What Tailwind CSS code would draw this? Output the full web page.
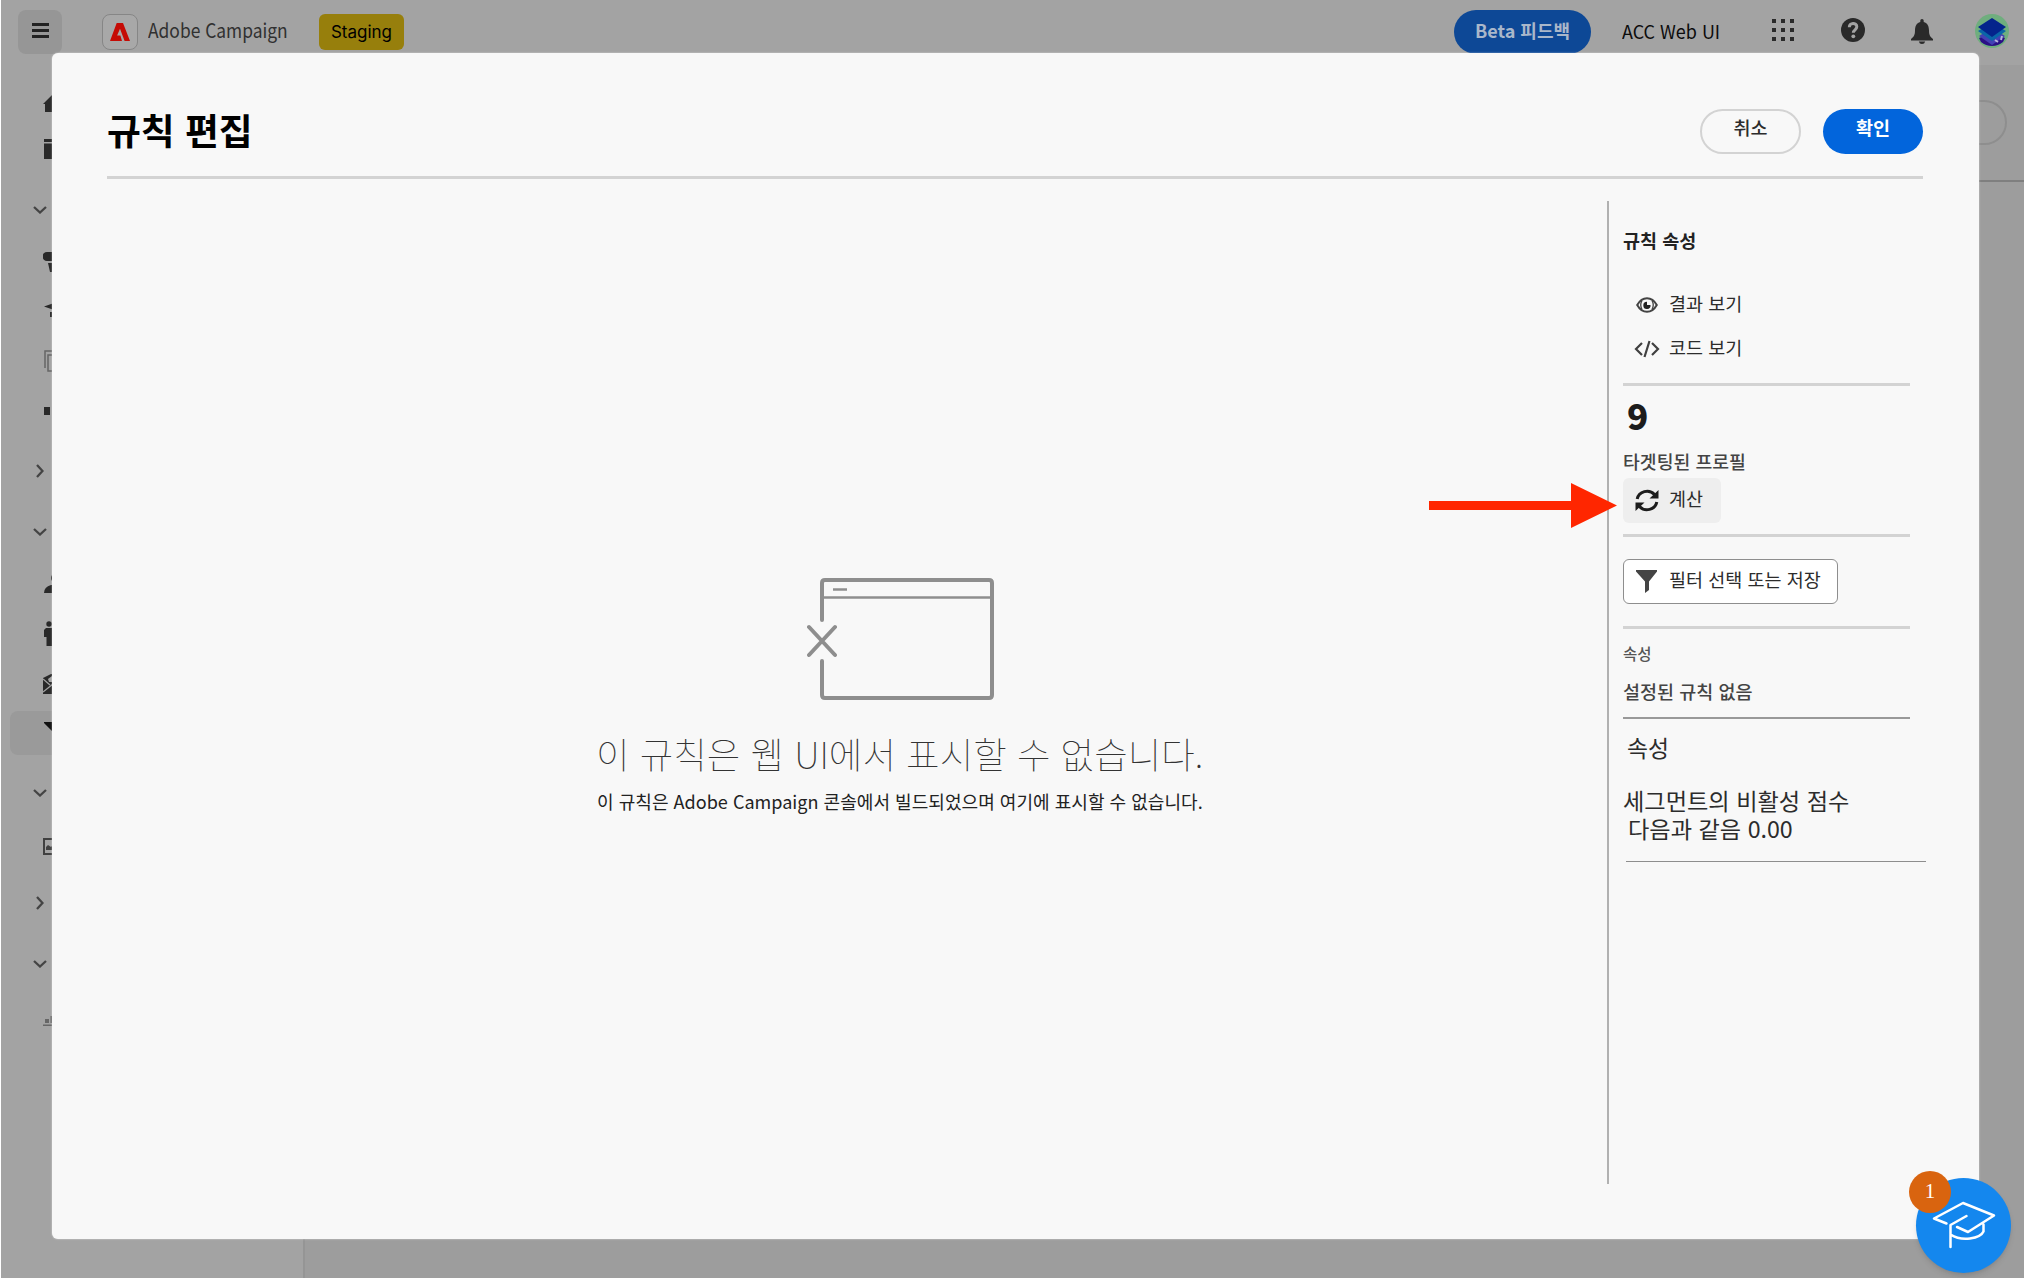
<!DOCTYPE html>
<html lang="ko">
<head>
<meta charset="utf-8">
<title>규칙 편집</title>
<script src="https://cdn.jsdelivr.net/npm/@tailwindcss/browser@4"></script>
</head>
<body class="relative h-[1278px] w-[2024px] overflow-hidden bg-white pl-px font-['Noto_Sans_CJK_KR',sans-serif] text-[#2c2c2c]">
<div class="flex h-full flex-col bg-[#9d9d9d]">
  <header class="flex h-[65px] shrink-0 items-start bg-[#a3a3a3]">
    <div class="mt-[10px] ml-[17px] flex h-11 w-11 flex-col items-center justify-center gap-[3px] rounded-lg bg-[#969696] pb-[3px]">
      <i class="h-[3px] w-[17px] bg-[#222]"></i><i class="h-[3px] w-[17px] bg-[#222]"></i><i class="h-[3px] w-[17px] bg-[#222]"></i>
    </div>
    <div class="mt-[14px] ml-[40px] flex h-9 w-9 items-center justify-center rounded-lg border border-[#868686] bg-[#a8a8a8]">
      <svg class="h-[18px] w-[20px]" viewBox="0 0 20 18"><path d="M6.7 0H13L20 18H14.6L10 5.8 7.1 12.6H10.4L12 18H0Z" fill="#c50b05"/></svg>
    </div>
    <div class="mt-[14px] ml-[10px] w-[171px] origin-left scale-x-[0.87] text-[20px] leading-[31px] whitespace-nowrap text-[#303030]">Adobe Campaign</div>
    <div class="mt-[14px] flex h-9 w-[85px] items-center justify-center rounded-md bg-[#977f0c] pt-px font-['Inter'] text-[17px] text-black">Staging</div>
    <div class="mt-[10px] ml-[1050px] flex h-11 w-[137px] items-center justify-center rounded-full bg-[#0d4896] pb-[4px] text-[18px] font-bold text-[#a9b7ca]">Beta 피드백</div>
    <div class="mt-[16px] ml-[31px] w-[150px] origin-left scale-x-[0.945] text-[19px] leading-[30px] whitespace-nowrap text-[#0c0c0c]">ACC Web UI</div>
    <svg class="mt-[19px] h-[22px] w-[22px]" viewBox="0 0 22 22" fill="#2a2a2a"><path d="M0 0h4v4H0zM9 0h4v4H9zM18 0h4v4h-4zM0 9h4v4H0zM9 9h4v4H9zM18 9h4v4h-4zM0 18h4v4H0zM9 18h4v4H9zM18 18h4v4h-4z"/></svg>
    <svg class="mt-[18px] ml-[47px] h-6 w-6" viewBox="0 0 24 24"><circle cx="12" cy="12" r="12" fill="#292929"/><path d="M8.300 9.300C8.200 4.300 15.800 4.300 15.800 8.800c0 3-3.500 3-3.500 6" fill="none" stroke="#a3a3a3" stroke-width="3"/><circle cx="12.300" cy="18.300" r="1.900" fill="#a3a3a3"/></svg>
    <svg class="mt-[19px] ml-[46px] h-[25px] w-[22px]" viewBox="0 0 22 25" fill="#2a2a2a"><path d="M9.300 3V1.500q0-1.500 1.700-1.500t1.700 1.500V3c4 1 5.300 4.500 5.300 8.500 0 5 1.500 6.500 4 8.500v1.500H0V20c2.500-2 4-3.500 4-8.500C4 7.500 5.300 4 9.300 3ZM7.800 22.500h6.400Q13.500 25 11 25t-3.200-2.500Z"/></svg>
    <svg class="mt-[14px] ml-[42px] h-[34px] w-[34px]" viewBox="0 0 34 34"><circle cx="17" cy="17" r="17" fill="#6fae7e"/><path d="M4 24l13-5 13 5-2 4a17 17 0 0 1-22 0Z" fill="#2b0f86"/><path d="M4 22l13-8 13 8-13 9Z" fill="#4340b4"/><path d="M3 17l14-8 14 8-14 10Z" fill="#0a65a8"/><path d="M3 13L17 4l14 9-14 10Z" fill="#04248c"/><path d="M20 26l3 2M27 22l-1 4" stroke="#b6b2dd" stroke-width="2"/></svg>
  </header>
  <div class="flex flex-1">
    <nav class="flex w-[304px] flex-col border-r-2 border-[#959595] bg-[#a3a3a3] pt-4 text-[#292929]">
      <div class="flex h-11 items-center pl-[42px]"><svg class="h-[18px] w-5" viewBox="0 0 20 18" fill="currentColor"><path d="M10 0L20 10H17V18H2V10H0Z"/></svg></div>
      <div class="mt-0.5 flex h-11 items-center pl-[43px]"><svg class="h-5 w-5" viewBox="0 0 20 20" fill="currentColor"><path d="M0 0h20v3H0zM0 4.500h20V20H0z"/></svg></div>
      <div class="mt-[17px] flex h-11 items-center pl-[32px]"><svg class="h-2 w-3.5" viewBox="0 0 14 8" fill="none" stroke="#444" stroke-width="2.300"><path d="M1 1l6 5.500L13 1"/></svg></div>
      <div class="mt-2 flex h-11 items-center pl-[42px]"><svg class="h-5 w-5" viewBox="0 0 20 20" fill="currentColor"><path d="M4 0h12a4 4 0 0 1 0 9H4A4 4 0 0 1 4 0ZM5 11h10l-1 9H7Z"/></svg></div>
      <div class="mt-1 flex h-11 items-center pl-[43px]"><svg class="h-3.5 w-5" viewBox="0 0 20 14" fill="currentColor"><path d="M0 3.500L10 0l10 3.500L10 7ZM6 9h8v5H6z"/></svg></div>
      <div class="mt-[7px] flex h-11 items-center pl-[43px]"><svg class="h-[22px] w-5" viewBox="0 0 20 22" fill="none" stroke="#666" stroke-width="1.500"><path d="M1 18V1h16M4 21V5h15v16Z"/></svg></div>
      <div class="mt-1.5 flex h-11 items-center pl-[43px]"><svg class="h-2 w-4" viewBox="0 0 16 8" fill="currentColor"><path d="M0 0h6v8H0zM10 0h6v8h-6z"/></svg></div>
      <div class="mt-4 flex h-11 items-center pl-[35px]"><svg class="h-3.5 w-2" viewBox="0 0 8 14" fill="none" stroke="#444" stroke-width="2.300"><path d="M1 1l5.500 6L1 13"/></svg></div>
      <div class="mt-[17px] flex h-11 items-center pl-[32px]"><svg class="h-2 w-3.5" viewBox="0 0 14 8" fill="none" stroke="#444" stroke-width="2.300"><path d="M1 1l6 5.500L13 1"/></svg></div>
      <div class="mt-[7px] flex h-11 items-center pl-[43px]"><svg class="h-5 w-5" viewBox="0 0 20 20" fill="currentColor"><circle cx="12" cy="5" r="5"/><path d="M0 20q0-6 7-8h6q7 2 7 8Z"/></svg></div>
      <div class="mt-1.5 flex h-11 items-center pl-[43px]"><svg class="h-[25px] w-5" viewBox="0 0 20 25" fill="currentColor"><circle cx="5" cy="3" r="2.700"/><path d="M2 7h16v9H8v9H2.500v-9H0V9Z"/></svg></div>
      <div class="mt-[7px] flex h-11 items-center pl-[42px]"><svg class="h-5 w-5" viewBox="0 0 20 20" fill="currentColor"><path d="M0 4l10-5v21H0Z"/><path d="M5 5l4-3v6H6Z" fill="#a3a3a3"/><path d="M0 5l7 6M0 18L10 10" stroke="#a3a3a3" stroke-width="1.300"/></svg></div>
      <div class="mt-[5px] ml-[8.500px] flex h-11 items-center rounded-l-lg bg-[#9a9a9a] pb-px pl-[34px]"><svg class="h-[22px] w-5" viewBox="0 0 20 22" fill="#111"><path d="M0 0h20v1L12 11v11h-2V11L0 1Z"/></svg></div>
      <div class="mt-4 flex h-11 items-center pl-[32px]"><svg class="h-2 w-3.5" viewBox="0 0 14 8" fill="none" stroke="#444" stroke-width="2.300"><path d="M1 1l6 5.500L13 1"/></svg></div>
      <div class="mt-[9px] flex h-11 items-center pl-[42px]"><svg class="h-[17px] w-5" viewBox="0 0 20 17" fill="none" stroke="#404040" stroke-width="2"><path d="M1 1h18v15H1z"/><path d="M3 12V9l2-2 3 2 4-4 5 7Z" fill="#404040" stroke="none"/></svg></div>
      <div class="mt-[13px] flex h-11 items-center pl-[35px]"><svg class="h-3.5 w-2" viewBox="0 0 8 14" fill="none" stroke="#444" stroke-width="2.300"><path d="M1 1l5.500 6L1 13"/></svg></div>
      <div class="mt-[17px] flex h-11 items-center pl-[32px]"><svg class="h-2 w-3.5" viewBox="0 0 14 8" fill="none" stroke="#444" stroke-width="2.300"><path d="M1 1l6 5.500L13 1"/></svg></div>
      <div class="mt-[13px] flex h-11 items-center pl-[42px]"><svg class="h-2.5 w-5" viewBox="0 0 20 10" fill="#666"><path d="M0 8.500h20V10H0zM2 3h4v4H2zM7.500 0h4v7h-4z"/></svg></div>
    </nav>
    <div class="flex-1">
      <div class="flex h-[117px] items-start justify-end border-b-2 border-[#7f7f7f] pt-[35px] pr-[17px]">
        <div class="h-[45px] w-[140px] rounded-full border-2 border-[#8e8e8e]"></div>
      </div>
    </div>
  </div>
</div>

<section class="absolute top-[53px] left-[51.500px] flex h-[1186px] w-[1927.500px] flex-col rounded-md bg-[#f8f8f8] pr-[56px] pl-[55.500px] shadow-[0_0_2px_rgba(255,255,255,0.6)]">
  <div class="flex h-[125.500px] shrink-0 items-start border-b-[3px] border-[#d3d3d3] pt-[55.500px]">
    <h1 class="mt-[-3px] flex-1 text-[36.800px] leading-[46px] font-bold text-black">규칙 편집</h1>
    <button class="mr-[22px] flex h-[45px] w-[101px] items-center justify-center rounded-full border-[2.500px] border-[#d3d3d3] pb-[6px] text-[18.500px] font-medium">취소</button>
    <button class="flex h-[45px] w-[100px] items-center justify-center rounded-full bg-[#0265dc] pb-[6px] text-[18.500px] font-bold text-white">확인</button>
  </div>
  <div class="flex pt-[22.500px]">
    <main class="flex w-[1500px] shrink-0 flex-col pt-[377px] pl-[489px]">
      <svg class="ml-[211px] h-[122px] w-[188px]" viewBox="0 0 188 122" fill="none" stroke="#8e8e8e" stroke-width="4" stroke-linecap="round"><path d="M15 42V5q0-3 3-3H182q3 0 3 3V117q0 3-3 3H18q-3 0-3-3V83M2 49L28 77M28 49L2 77"/><path d="M15 19.500H185M26 11.500H40" stroke-width="2.500" stroke-linecap="butt"/></svg>
      <h2 class="mt-[24px] text-[36.450px] leading-[58px] font-thin whitespace-nowrap text-[#333]">이 규칙은 웹 UI에서 표시할 수 없습니다.</h2>
      <p class="mt-[4px] ml-px origin-left scale-x-[0.976] text-[18.500px] leading-[30px] whitespace-nowrap text-[#222]">이 규칙은 Adobe Campaign 콘솔에서 빌드되었으며 여기에 표시할 수 없습니다.</p>
    </main>
    <aside class="flex h-[983px] shrink-0 flex-col border-l-2 border-[#b1b1b1] pl-[13px] text-[18.500px] leading-[30px] whitespace-nowrap">
      <h3 class="mt-[24px] ml-px text-[18.500px] font-bold text-[#222]">규칙 속성</h3>
      <div class="mt-[33px] ml-px flex h-[30px] items-center">
        <svg class="mt-1 ml-[13px] h-4 w-[22px]" viewBox="0 0 22 16"><path d="M1.200 8Q5 1.200 11 1.200T20.800 8Q17 14.800 11 14.800T1.200 8Z" fill="none" stroke="#444" stroke-width="2"/><path d="M6 3.500Q3.500 8 6 12.500M16 3.500Q18.500 8 16 12.500" fill="none" stroke="#444" stroke-width="1.300"/><path d="M11 4.800V8h3.500A3.600 3.600 0 1 1 11 4.800Z" fill="#222"/></svg>
        <span class="ml-[11px]">결과 보기</span>
      </div>
      <div class="mt-[14px] ml-px flex h-[30px] items-center">
        <svg class="mt-[4px] ml-[11px] h-[18px] w-[26px]" viewBox="0 0 26 18" fill="none" stroke="#404040" stroke-width="2.200"><path d="M8 3L2 9l6 6M18 3l6 6-6 6M15.500 1l-5 16"/></svg>
        <span class="ml-[9px]">코드 보기</span>
      </div>
      <div class="mt-[21px] ml-px h-[3px] w-[287px] bg-[#d3d3d3]"></div>
      <div class="mt-[9px] ml-[5px] h-[40px] text-[35px] leading-[40px] font-black text-[#1c1c1c]">9</div>
      <div class="mt-[11px] ml-px text-[18.300px] font-medium text-[#444]">타겟팅된 프로필</div>
      <div class="mt-[2px] ml-px flex h-[45px] w-[98px] items-center rounded-md bg-[#eee]">
        <svg class="ml-3 h-[23px] w-[24px]" viewBox="0 0 24 23" fill="none" stroke="#1c1c1c" stroke-width="3"><path d="M2.200 10A10 9.500 0 0 1 19.500 5.500M21.800 13A10 9.500 0 0 1 4.500 17.500"/><path d="M23.500 1v8.500h-9ZM.5 22v-8.500h9Z" fill="#1c1c1c" stroke="none"/></svg>
        <span class="mb-[5px] ml-[10px]">계산</span>
      </div>
      <div class="mt-[11px] ml-px h-[3px] w-[287px] bg-[#d3d3d3]"></div>
      <div class="mt-[22px] ml-px flex h-[45px] w-[215px] shrink-0 items-center rounded-md border-[1.500px] border-[#8e8e8e] bg-white">
        <svg class="ml-3 h-[23px] w-[21px]" viewBox="0 0 21 23" fill="#444"><path d="M0 0h21v1.500L13 11.500V20l-4 3V11.500L0 1.500Z"/></svg>
        <span class="mb-[5px] ml-[12px]">필터 선택 또는 저장</span>
      </div>
      <div class="mt-[22px] ml-px h-[3px] w-[287px] bg-[#d3d3d3]"></div>
      <div class="mt-[9px] ml-px text-[15.500px] font-medium text-[#555]">속성</div>
      <div class="mt-[8px] ml-px font-medium text-[#444]">설정된 규칙 없음</div>
      <div class="mt-[11px] ml-px h-[2px] w-[287px] bg-[#999]"></div>
      <div class="mt-[13px] ml-[5px] text-[22.800px] leading-[32px]">속성</div>
      <div class="mt-[22px] ml-px text-[23.200px] leading-[28px]">세그먼트의 비활성 점수<br><span class="ml-[5px]">다음과 같음 0.00</span></div>
      <div class="mt-[19px] ml-[4px] h-px w-[300px] bg-[#8e8e8e]"></div>
    </aside>
  </div>
</section>

<svg class="absolute top-[483px] left-[1428.500px] h-[45px] w-[188px]" viewBox="0 0 188 45"><path d="M0 18H142V0L188 22.500 142 45V27H0Z" fill="#ff2600"/></svg>

<div class="absolute top-[1177.500px] left-[1916px] flex h-[95px] w-[95px] items-center justify-center rounded-full bg-[#1487ee] shadow-md">
  <svg class="h-[48px] w-[64px]" viewBox="0 0 64 48" fill="none" stroke="#fff" stroke-width="2.500" stroke-linecap="round" stroke-linejoin="round"><path d="M14.500 22.500L2 17.500 31 2 62 14.500 36 31 25 26M34.500 15L18.500 24V46M18.500 33.500Q27 39 38 37.500T51.500 30.500V23.500"/></svg>
</div>
<div class="absolute top-[1171px] left-[1909px] flex h-[42px] w-[42px] items-center justify-center rounded-full bg-[#d9640f] pb-px font-['Liberation_Serif',serif] text-[21px] text-white">1</div>
</body>
</html>
